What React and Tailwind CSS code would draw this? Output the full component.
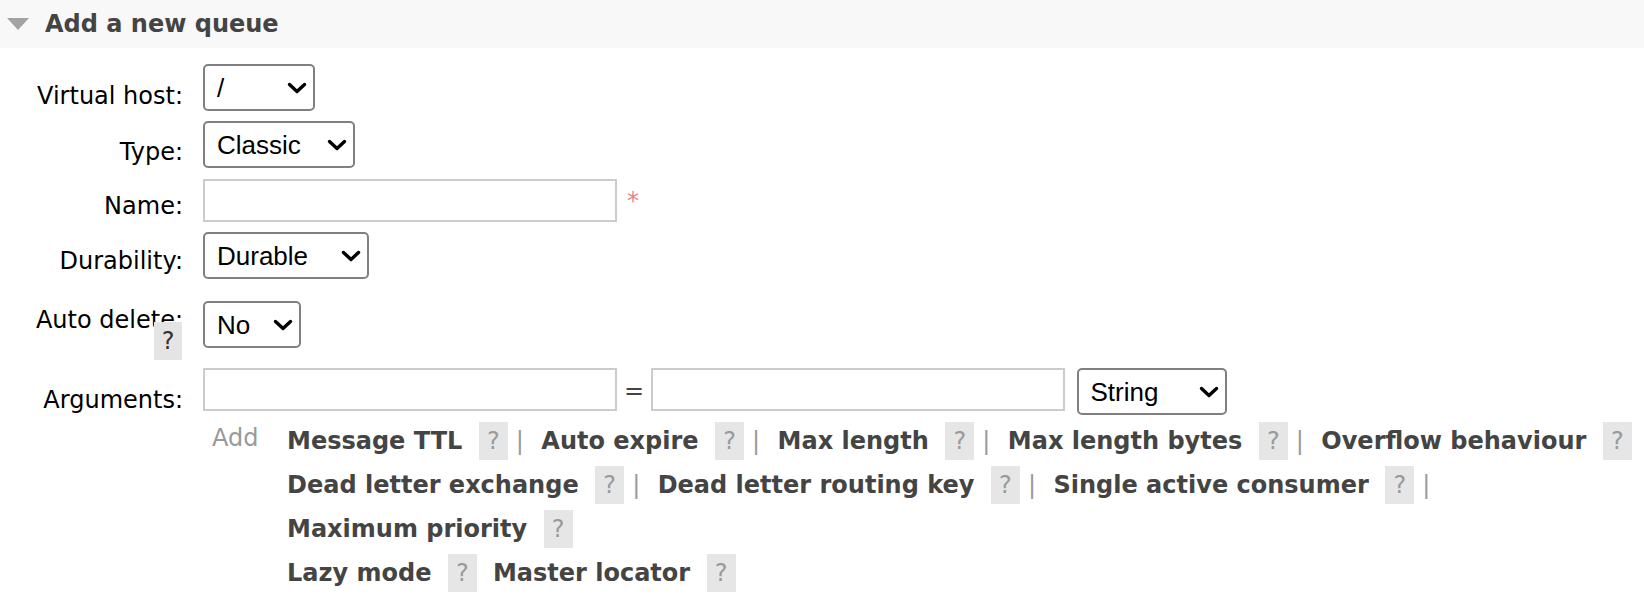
import React from "react";

const Chevron = () => (
  <svg width="20" height="12" viewBox="0 0 20 12" className="shrink-0">
    <polyline
      points="2.5,2.5 10,9.5 17.5,2.5"
      fill="none"
      stroke="#000"
      strokeWidth="3.4"
      strokeLinecap="round"
      strokeLinejoin="round"
    />
  </svg>
);

function Select({ value, w }) {
  return (
    <div
      className={`flex h-[47px] shrink-0 items-center justify-between rounded-[5px] border-2 border-[#808080] bg-white pl-[12px] pr-[6px] font-['Liberation_Sans',Arial,sans-serif] text-[26px] leading-none text-black ${w}`}
    >
      <span>{value}</span>
      <Chevron />
    </div>
  );
}

function TextBox() {
  return (
    <input
      type="text"
      readOnly
      className="block h-[43px] w-[414px] shrink-0 border-2 border-[#cccccc] bg-white outline-none"
    />
  );
}

function Link({ children, first }) {
  return (
    <span
      className={`whitespace-nowrap text-[24px] font-bold leading-[44px] text-[#444444] ${first ? "" : "ml-[17.5px]"}`}
    >
      {children}
    </span>
  );
}

function Help({ ml }) {
  return (
    <span
      className={`mt-[3px] flex h-[38px] w-[29px] shrink-0 items-center justify-center bg-[#e6e6e6] text-[24px] leading-[28px] text-[#9a9a9a] ${ml}`}
    >
      ?
    </span>
  );
}

function Sep() {
  return (
    <span className="ml-[8px] w-[8px] text-center text-[24px] leading-[44px] text-[#9a9a9a]">
      |
    </span>
  );
}

export default function App() {
  return (
    <div className="min-h-[596px] w-full bg-white font-['DejaVu_Sans',Verdana,sans-serif]">
      {/* Header */}
      <div className="flex h-[48px] items-center bg-[#f8f8f8]">
        <svg className="ml-[7px] shrink-0" width="22" height="12" viewBox="0 0 22 12">
          <polygon points="0,0 22,0 11,12" fill="#a3a3a3" />
        </svg>
        <span className="ml-[16px] text-[24px] font-bold leading-[48px] text-[#444444]">
          Add a new queue
        </span>
      </div>

      <div className="flex flex-col">
        {/* Virtual host */}
        <div className="mt-[16px] flex items-start">
          <div className="w-[183px] shrink-0 pt-[17.5px] text-right text-[24px] leading-[28px] text-black">
            Virtual host:
          </div>
          <div className="ml-[20px]">
            <Select value="/" w="w-[112px]" />
          </div>
        </div>

        {/* Type */}
        <div className="mt-[10px] flex items-start">
          <div className="w-[183px] shrink-0 pt-[16.5px] text-right text-[24px] leading-[28px] text-black">
            Type:
          </div>
          <div className="ml-[20px]">
            <Select value="Classic" w="w-[152px]" />
          </div>
        </div>

        {/* Name */}
        <div className="mt-[11px] flex items-start">
          <div className="w-[183px] shrink-0 pt-[13px] text-right text-[24px] leading-[28px] text-black">
            Name:
          </div>
          <div className="ml-[20px] flex items-start">
            <TextBox />
            <span className="ml-[10px] mt-[8px] text-[24px] leading-[28px] text-[#e88585]">*</span>
          </div>
        </div>

        {/* Durability */}
        <div className="mt-[10px] flex items-start">
          <div className="w-[183px] shrink-0 pt-[15px] text-right text-[24px] leading-[28px] text-black">
            Durability:
          </div>
          <div className="ml-[20px]">
            <Select value="Durable" w="w-[166px]" />
          </div>
        </div>

        {/* Auto delete */}
        <div className="mt-[22px] flex items-start">
          <div className="flex w-[183px] shrink-0 flex-col items-end pt-[5px]">
            <div className="text-right text-[24px] leading-[28px] text-black">Auto delete:</div>
            <div className="-mt-[12px] mr-[1px] flex h-[38px] w-[28px] items-center justify-center bg-[#e4e4e4] text-[24px] leading-[28px] text-[#333333]">
              ?
            </div>
          </div>
          <div className="ml-[20px]">
            <Select value="No" w="w-[98px]" />
          </div>
        </div>

        {/* Arguments */}
        <div className="mt-[8px] flex items-start">
          <div className="w-[183px] shrink-0 pt-[17.5px] text-right text-[24px] leading-[28px] text-black">
            Arguments:
          </div>
          <div className="ml-[20px] flex items-start">
            <TextBox />
            <span className="ml-[7px] mt-[9px] w-[20px] text-[24px] leading-[28px] text-[#444444]">=</span>
            <div className="ml-[6.5px]">
              <TextBox />
            </div>
            <div className="ml-[12px]">
              <Select value="String" w="w-[150px]" />
            </div>
          </div>
        </div>

        {/* Add links */}
        <div className="mt-[4px] flex items-start">
          <div className="ml-[212px] w-[75px] shrink-0 text-[24px] leading-[38px] text-[#999999]">
            Add
          </div>
          <div className="flex flex-col">
            <div className="flex h-[44px] items-start">
              <Link first>Message TTL</Link>
              <Help ml="ml-[16.5px]" />
              <Sep />
              <Link>Auto expire</Link>
              <Help ml="ml-[16.5px]" />
              <Sep />
              <Link>Max length</Link>
              <Help ml="ml-[16.5px]" />
              <Sep />
              <Link>Max length bytes</Link>
              <Help ml="ml-[16.5px]" />
              <Sep />
              <Link>Overflow behaviour</Link>
              <Help ml="ml-[16.5px]" />
            </div>
            <div className="flex h-[44px] items-start">
              <Link first>Dead letter exchange</Link>
              <Help ml="ml-[16.5px]" />
              <Sep />
              <Link>Dead letter routing key</Link>
              <Help ml="ml-[16.5px]" />
              <Sep />
              <Link>Single active consumer</Link>
              <Help ml="ml-[16.5px]" />
              <Sep />
            </div>
            <div className="flex h-[44px] items-start">
              <Link first>Maximum priority</Link>
              <Help ml="ml-[16.5px]" />
            </div>
            <div className="flex h-[44px] items-start">
              <Link first>Lazy mode</Link>
              <Help ml="ml-[16.5px]" />
              <span className="ml-[16px] whitespace-nowrap text-[24px] font-bold leading-[44px] text-[#444444]">
                Master locator
              </span>
              <Help ml="ml-[16.5px]" />
            </div>
          </div>
        </div>
      </div>
    </div>
  );
}
